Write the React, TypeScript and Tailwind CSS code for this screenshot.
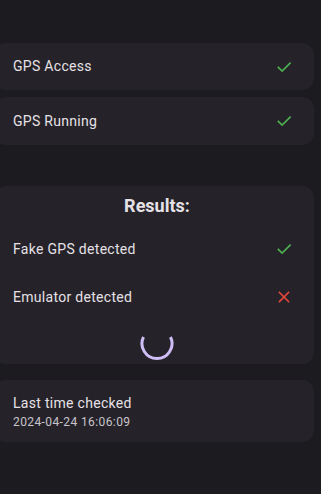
import React from "react";

function Check() {
  return (
    <svg width="18" height="18" viewBox="0 0 24 24" fill="none" stroke="#4caf50" strokeWidth="2.2" strokeLinecap="square">
      <path d="M4.5 12.5l5 5L20 7" />
    </svg>
  );
}

function Cross() {
  return (
    <svg width="18" height="18" viewBox="0 0 24 24" fill="none" stroke="#e5453a" strokeWidth="2.2" strokeLinecap="square">
      <path d="M6 6l12 12M18 6L6 18" />
    </svg>
  );
}

function Row({ label, icon, h }: { label: string; icon: React.ReactNode; h: string }) {
  return (
    <div className={`flex items-center justify-between pl-[13px] pr-[21px] ${h}`}>
      <span className="text-[14px] tracking-[0.3px] text-[#e6e1e6]">{label}</span>
      {icon}
    </div>
  );
}

export default function App() {
  return (
    <div
      className="w-[321px] h-[494px] bg-[#1c1b1f] overflow-hidden"
      style={{ fontFamily: "Roboto, 'Noto Sans', sans-serif" }}
    >
      <div className="pt-[43px] -ml-[6px] w-[320px] flex flex-col">
        <div className="bg-[#252329] rounded-[12px] pl-[6px] h-[47px] flex flex-col justify-center">
          <Row label="GPS Access" icon={<Check />} h="h-[47px]" />
        </div>
        <div className="mt-[7px] bg-[#252329] rounded-[12px] pl-[6px] h-[48px] flex flex-col justify-center">
          <Row label="GPS Running" icon={<Check />} h="h-[48px]" />
        </div>

        <div className="mt-[41px] bg-[#252329] rounded-[12px] pl-[6px] h-[178px] flex flex-col">
          <div className="pt-[8px] text-center text-[18px] font-bold text-[#e6e1e6] leading-[24px]">
            Results:
          </div>
          <Row label="Fake GPS detected" icon={<Check />} h="h-[48px] mt-[7px]" />
          <Row label="Emulator detected" icon={<Cross />} h="h-[48px]" />
          <div className="flex justify-center mt-[4px]">
            <svg width="36" height="36" viewBox="0 0 36 36" fill="none">
              <path d="M4.5 12 A15 15 0 1 0 31.5 12" stroke="#cfbdf5" strokeWidth="3" strokeLinecap="butt" />
            </svg>
          </div>
        </div>

        <div className="mt-[16px] bg-[#252329] rounded-[12px] pl-[19px] h-[62px] flex flex-col justify-center">
          <div className="text-[14px] tracking-[0.3px] text-[#e6e1e6] leading-[20px]">Last time checked</div>
          <div className="text-[12px] tracking-[0.4px] text-[#c9c4cc] leading-[16px] mt-[1px]">2024-04-24 16:06:09</div>
        </div>
      </div>
    </div>
  );
}
